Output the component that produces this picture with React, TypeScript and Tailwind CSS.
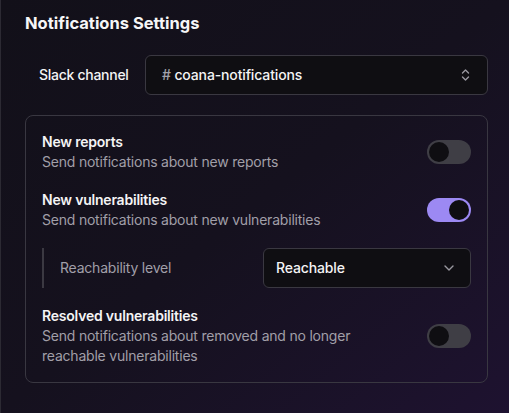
import React, { useState } from 'react';

const Toggle = ({ on, onChange }: { on: boolean; onChange: () => void }) => (
  <button
    onClick={onChange}
    className={`flex h-6 w-11 shrink-0 items-center rounded-full p-[2px] ${on ? 'bg-[#9c89f3] justify-end' : 'bg-[#3f3e45] justify-start'}`}
  >
    <span className="h-5 w-5 rounded-full bg-[#0f0e12]" />
  </button>
);

const Row = ({
  title,
  desc,
  on,
  onChange,
}: {
  title: string;
  desc: React.ReactNode;
  on: boolean;
  onChange: () => void;
}) => (
  <div className="flex items-center justify-between gap-4">
    <div className="text-sm leading-5 tracking-[-0.015em]">
      <div className="font-semibold text-[#f4f4f5]">{title}</div>
      <div className="text-[#a19fa8]">{desc}</div>
    </div>
    <Toggle on={on} onChange={onChange} />
  </div>
);

export default function App() {
  const [reports, setReports] = useState(false);
  const [vulns, setVulns] = useState(true);
  const [resolved, setResolved] = useState(false);

  return (
    <div
      className="h-[413px] w-[509px] overflow-hidden border-l border-[#2c2a33] bg-gradient-to-br from-[#121019] via-[#15111e] to-[#1e1230] pl-6 pr-[21px] pt-[13px]"
      style={{ fontFamily: 'Inter, "Noto Sans", sans-serif' }}
    >
      <h2 className="text-[16.5px] font-bold leading-5 text-[#f6f6f7]">Notifications Settings</h2>

      {/* Slack channel */}
      <div className="mt-[22px] flex items-center">
        <span className="w-[120px] pl-[14px] text-sm font-medium tracking-[-0.02em] text-[#f4f4f5]">Slack channel</span>
        <div className="flex h-10 flex-1 items-center justify-between rounded-md border border-[#3a3841] bg-[#0f0e12] pl-4 pr-[17px]">
          <span className="text-sm font-medium tracking-[-0.01em] text-[#f4f4f5]">
            <span className="text-[#a1a1aa]">#</span> coana-notifications
          </span>
          <svg width="9" height="14" viewBox="0 0 9 14" fill="none" stroke="#9a98a0" strokeWidth="1.4" strokeLinecap="round" strokeLinejoin="round">
            <path d="M1.5 5 4.5 2 7.5 5" />
            <path d="M1.5 9 4.5 12 7.5 9" />
          </svg>
        </div>
      </div>

      {/* Card */}
      <div className="mt-5 flex flex-col gap-[18px] rounded-lg border border-[#393741] p-4">
        <Row
          title="New reports"
          desc="Send notifications about new reports"
          on={reports}
          onChange={() => setReports(!reports)}
        />
        <Row
          title="New vulnerabilities"
          desc="Send notifications about new vulnerabilities"
          on={vulns}
          onChange={() => setVulns(!vulns)}
        />

        <div className="flex items-center justify-between border-l-2 border-[#3b3942]">
          <span className="pl-4 text-sm tracking-[-0.015em] text-[#a19fa8]">Reachability level</span>
          <div className="flex h-10 w-[208px] items-center justify-between rounded-md border border-[#3a3841] bg-[#0f0e12] pl-3 pr-4">
            <span className="text-sm font-medium tracking-[-0.01em] text-[#f4f4f5]">Reachable</span>
            <svg width="10" height="6" viewBox="0 0 10 6" fill="none" stroke="#9a98a0" strokeWidth="1.4" strokeLinecap="round" strokeLinejoin="round">
              <path d="M1 1 5 5 9 1" />
            </svg>
          </div>
        </div>

        <Row
          title="Resolved vulnerabilities"
          desc={
            <>
              Send notifications about removed and no longer
              <br />
              reachable vulnerabilities
            </>
          }
          on={resolved}
          onChange={() => setResolved(!resolved)}
        />
      </div>
    </div>
  );
}
